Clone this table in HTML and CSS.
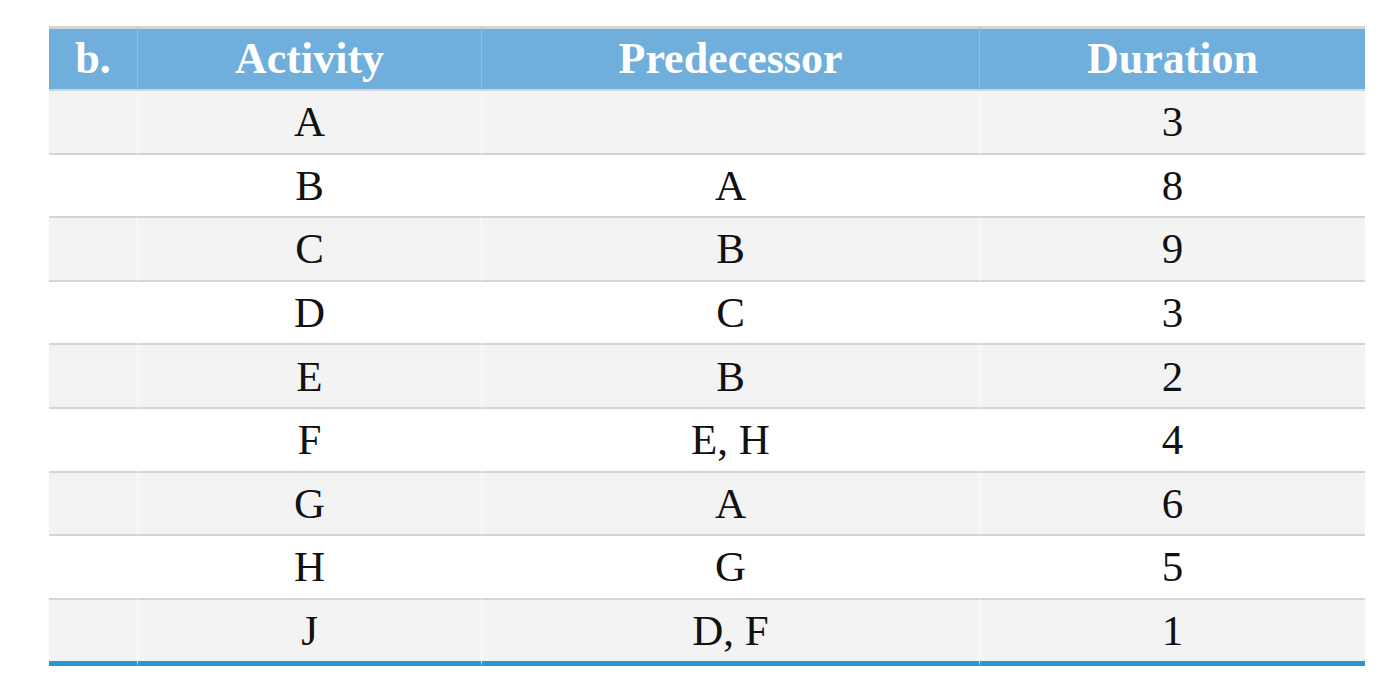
FILE: index.html
```html
<!DOCTYPE html>
<html>
<head>
<meta charset="utf-8">
<link rel="stylesheet" href="styles.css">
</head>
<body>
<div class="page">
  <table class="grid">
    <colgroup>
      <col class="c1"><col class="c2"><col class="c3"><col class="c4">
    </colgroup>
    <thead>
      <tr><th>b.</th><th>Activity</th><th>Predecessor</th><th>Duration</th></tr>
    </thead>
    <tbody>
      <tr class="odd"><td></td><td>A</td><td></td><td>3</td></tr>
      <tr><td></td><td>B</td><td>A</td><td>8</td></tr>
      <tr class="odd"><td></td><td>C</td><td>B</td><td>9</td></tr>
      <tr><td></td><td>D</td><td>C</td><td>3</td></tr>
      <tr class="odd"><td></td><td>E</td><td>B</td><td>2</td></tr>
      <tr><td></td><td>F</td><td>E, H</td><td>4</td></tr>
      <tr class="odd"><td></td><td>G</td><td>A</td><td>6</td></tr>
      <tr><td></td><td>H</td><td>G</td><td>5</td></tr>
      <tr class="odd last"><td></td><td>J</td><td>D, F</td><td>1</td></tr>
    </tbody>
  </table>
</div>
</body>
</html>
```

FILE: styles.css
```css
html, body {
  margin: 0;
  padding: 0;
  background: #ffffff;
}

.page {
  padding: 26px 0 0 49px;
}

.grid {
  border-collapse: separate;
  border-spacing: 0;
  table-layout: fixed;
  width: 1316px;
  font-family: "Liberation Serif", "Times New Roman", serif;
  color: #111111;
}

.c1 { width: 88px; }
.c2 { width: 344px; }
.c3 { width: 498px; }
.c4 { width: 386px; }

th, td {
  padding: 0;
  text-align: center;
  vertical-align: middle;
  border-bottom: 2px solid #d4d4d4;
}

th {
  height: 60px;
  background: #70aedb;
  color: #ffffff;
  font-weight: bold;
  font-size: 44px;
  border-top: 3px solid #d4d4d4;
  line-height: 1;
}

th + th {
  border-left: 1px solid #8dc0e5;
}

td {
  height: 61.6px;
  font-size: 43px;
  line-height: 1;
}

td + td {
  border-left: 1px solid rgba(255, 255, 255, 0.6);
}

tr.odd td {
  background: #f3f3f3;
}

tr.last td {
  border-bottom: 5px solid #2898d4;
}
```
